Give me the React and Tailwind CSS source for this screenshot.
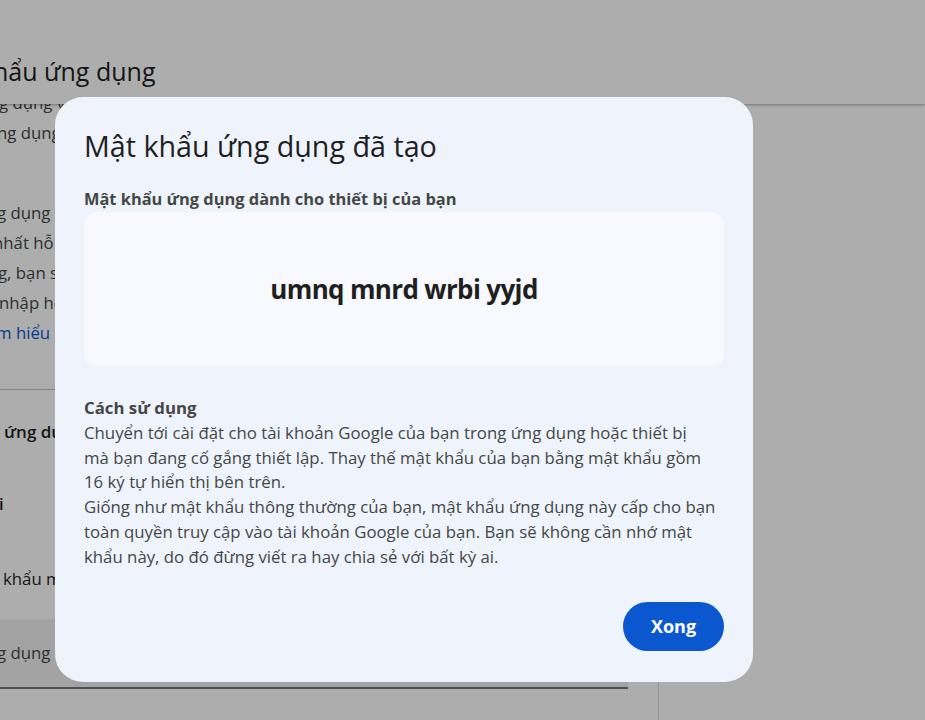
import React from "react";

const sans = { fontFamily: "'Open Sans', 'Noto Sans', sans-serif" };

function PageBehind() {
  return (
    <div className="h-[720px] w-full overflow-hidden bg-white" style={sans}>
      <div className="relative z-10 h-[104px] bg-white shadow-[0_1px_3px_rgba(0,0,0,0.35)]">
        <h1 className="-ml-[72px] pt-[55px] text-[25px] leading-8 text-[#1f1f1f]">Mật khẩu ứng dụng</h1>
      </div>

      <div className="flex -mt-[16px]">
        <div className="w-[628px] shrink-0 text-[16.8px] leading-[30px] text-[#444746]">
          <p className="-ml-[1px] whitespace-nowrap">g dụng và dịch vụ</p>
          <p className="-ml-[3px] whitespace-nowrap">ng dụng không hỗ trợ</p>

          <div className="mt-[50px]">
            <p className="-ml-[3px] whitespace-nowrap">g dụng hoặc thiết bị</p>
            <p className="-ml-[7px] whitespace-nowrap">nhất hỗ trợ xác minh</p>
            <p className="-ml-[2px] whitespace-nowrap">g, bạn sẽ cần</p>
            <p className="-ml-[1px] whitespace-nowrap">nhập hoặc truy cập</p>
            <p className="-ml-[4px] whitespace-nowrap text-[#0b57d0]">m hiểu thêm</p>
          </div>

          <div className="mt-[41px] border-t border-[#c4c7c5]" />

          <p className="mt-[27px] ml-[4px] whitespace-nowrap text-[17px] font-semibold text-[#1f1f1f]">ứng dụng của bạn</p>
          <p className="mt-[42px] -ml-[1px] whitespace-nowrap font-semibold text-[#1f1f1f]">i</p>
          <p className="mt-[45px] ml-[3px] whitespace-nowrap text-[#1f1f1f]">khẩu mới</p>

          <div className="mt-[25px] flex h-[68px] items-center bg-[#f1f1f1]">
            <p className="-ml-[3px] whitespace-nowrap">g dụng</p>
          </div>
          <div className="h-[2px] bg-[#747775]" />
        </div>
        <div className="ml-[30px] h-[760px] w-px bg-[#dadce0]" />
      </div>
    </div>
  );
}

function CreatedDialog() {
  return (
    <div
      className="fixed left-[55px] top-[97px] z-30 flex h-[585px] w-[698px] flex-col rounded-[28px] bg-[#eef3fc] px-[29px] pt-[31px] pb-[31px]"
      style={sans}
    >
      <h2 className="text-[28.7px] leading-9 text-[#1f1f1f]">Mật khẩu ứng dụng đã tạo</h2>

      <p className="mt-[23px] text-[16.4px] font-bold leading-6 text-[#444746]">
        Mật khẩu ứng dụng dành cho thiết bị của bạn
      </p>

      <div className="mt-px flex h-[154px] items-center justify-center rounded-[12px] bg-[#f7f9fe]">
        <span className="text-[26px] font-bold tracking-tight text-[#1f1f1f]">umnq mnrd wrbi yyjd</span>
      </div>

      <div className="mt-[30px] text-[16.8px] leading-[24.8px] text-[#444746]">
        <p className="font-bold">Cách sử dụng</p>
        <p>
          Chuyển tới cài đặt cho tài khoản Google của bạn trong ứng dụng hoặc thiết bị
          <br />
          mà bạn đang cố gắng thiết lập. Thay thế mật khẩu của bạn bằng mật khẩu gồm
          <br />
          16 ký tự hiển thị bên trên.
        </p>
        <p>
          Giống như mật khẩu thông thường của bạn, mật khẩu ứng dụng này cấp cho bạn
          <br />
          toàn quyền truy cập vào tài khoản Google của bạn. Bạn sẽ không cần nhớ mật
          <br />
          khẩu này, do đó đừng viết ra hay chia sẻ với bất kỳ ai.
        </p>
      </div>

      <div className="mt-auto flex justify-end">
        <button className="h-[49px] w-[101px] rounded-full bg-[#0b57d0] text-[18px] font-bold text-white">
          Xong
        </button>
      </div>
    </div>
  );
}

export default function App() {
  return (
    <div className="relative h-[720px] w-full overflow-hidden">
      <PageBehind />
      <div className="fixed inset-0 z-20 bg-[rgba(0,0,0,0.32)]" />
      <CreatedDialog />
    </div>
  );
}
